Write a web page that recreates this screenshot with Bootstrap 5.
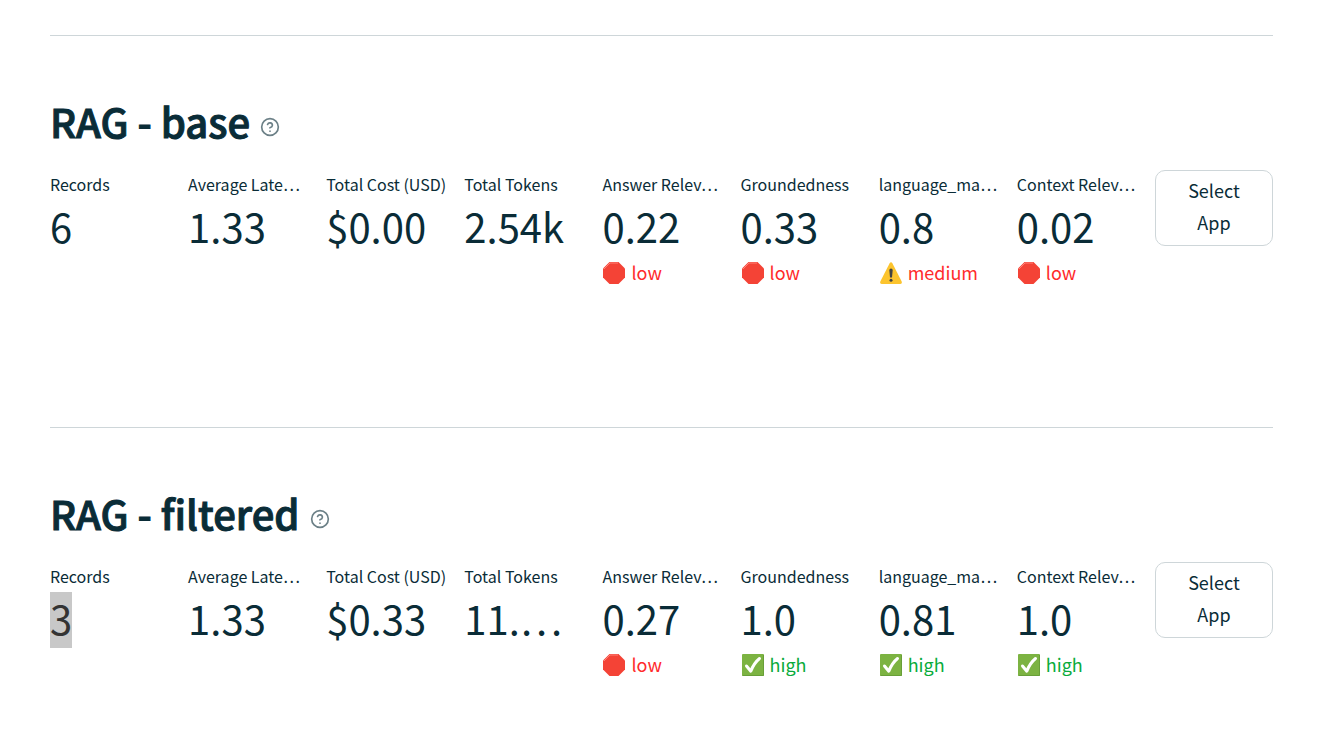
<!DOCTYPE html>
<html lang="en">
<head>
<meta charset="utf-8">
<meta name="viewport" content="width=device-width, initial-scale=1">
<title>App leaderboard</title>
<link href="https://cdn.jsdelivr.net/npm/bootstrap@5.3.0/dist/css/bootstrap.min.css" rel="stylesheet">
<style>
  body { font-family: "Noto Sans CJK KR", "Noto Sans", sans-serif; color: #0a2c37; background: #fff; }
  .leaderboard { padding: 35px 51px 0 50px; }
  .app-entry { border-top: 1px solid #ced6d9; min-height: 392px; padding-top: 56px; }
  .app-entry:last-child { min-height: 320px; }
  .app-title { font-size: 40px; line-height: 58px; font-weight: 500; margin-bottom: 20px; gap: 10px; }
  .app-title span { -webkit-text-stroke: 1px #0a2c37; }
  .help { color: #6c8087; margin-top: 12px; }
  .metrics { --bs-gutter-x: 20px; }
  .metrics > .col { min-width: 0; }
  .metric-label { font-size: 16px; line-height: 28px; }
  .metric-value { font-size: 40px; line-height: 56px; font-variant-east-asian: proportional-width; }
  .metric-value mark { padding: 0 0 2px; background: linear-gradient(#c8c8c8, #c8c8c8) 0 2px no-repeat; color: #333; display: inline-block; }
  .metric-delta { font-size: 18px; line-height: 32px; gap: 5px; margin-top: 2px; }
  .metric-delta svg { margin-top: 2px; }
  .bad { color: #ff2b2b; }
  .good { color: #09ab3b; }
  .select-btn { font-size: 18px; line-height: 32px; padding: 3px 15px 7px; color: #0a2c37; background: #fff; border: 1px solid #ced6d9; border-radius: 10px; }
</style>
</head>
<body>
<svg class="d-none" aria-hidden="true">
  <symbol id="i-help" viewBox="0 0 24 24"><g fill="none" stroke="currentColor" stroke-width="2" stroke-linecap="round" stroke-linejoin="round"><circle cx="12" cy="12" r="10"/><path d="M9.1 9a3 3 0 0 1 5.8 1c0 2-3 3-3 3M12 17h.01"/></g></symbol>
  <symbol id="i-stop" viewBox="0 0 22 22"><path fill="#f44336" d="M6.5 0h9L22 6.5v9L15.500 22h-9L0 15.500v-9z"/><path fill="none" stroke="#ff8177" d="M1 7 7 1h8"/></symbol>
  <symbol id="i-warn" viewBox="0 0 22 22"><path fill="#fcc42e" d="M9.500 1.500Q11-.8 12.500 1.500L21.700 19.500Q22.300 22 20 22H2Q-.3 22 .3 19.500z"/><path fill="#424242" d="M9.300 8q.2-1.600 1.700-1.600T12.700 8L12 15.500h-2z"/><circle cx="11" cy="18.300" r="1.500" fill="#424242"/></symbol>
  <symbol id="i-check" viewBox="0 0 22 22"><rect width="22" height="22" rx="1" fill="#7cb342"/><path fill="none" stroke="#689f38" d="M.5 21.500h21V1"/><path fill="none" stroke="#fff" stroke-width="3" stroke-linecap="round" stroke-linejoin="round" d="m4.500 12 4.300 5.200Q12 9 17.500 4.500"/></symbol>
</svg>
<main class="leaderboard">
  <section class="app-entry">
    <h2 class="app-title d-flex align-items-center"><span>RAG - base</span><svg class="help" width="20" height="20" role="img" aria-label="Help"><use href="#i-help"/></svg></h2>
    <div class="row metrics">
      <div class="col"><div class="metric-label text-nowrap">Records</div><div class="metric-value text-nowrap">6</div></div>
      <div class="col"><div class="metric-label text-nowrap">Average Late…</div><div class="metric-value text-nowrap">1.33</div></div>
      <div class="col"><div class="metric-label text-nowrap">Total Cost (USD)</div><div class="metric-value text-nowrap">$0.00</div></div>
      <div class="col"><div class="metric-label text-nowrap">Total Tokens</div><div class="metric-value text-nowrap">2.54k</div></div>
      <div class="col"><div class="metric-label text-nowrap">Answer Relev…</div><div class="metric-value text-nowrap">0.22</div><div class="metric-delta bad d-flex align-items-center"><svg width="24" height="22"><use href="#i-stop"/></svg>low</div></div>
      <div class="col"><div class="metric-label text-nowrap">Groundedness</div><div class="metric-value text-nowrap">0.33</div><div class="metric-delta bad d-flex align-items-center"><svg width="24" height="22"><use href="#i-stop"/></svg>low</div></div>
      <div class="col"><div class="metric-label text-nowrap">language_ma…</div><div class="metric-value text-nowrap">0.8</div><div class="metric-delta bad d-flex align-items-center"><svg width="24" height="22"><use href="#i-warn"/></svg>medium</div></div>
      <div class="col"><div class="metric-label text-nowrap">Context Relev…</div><div class="metric-value text-nowrap">0.02</div><div class="metric-delta bad d-flex align-items-center"><svg width="24" height="22"><use href="#i-stop"/></svg>low</div></div>
      <div class="col"><button type="button" class="btn select-btn w-100">Select<br>App</button></div>
    </div>
  </section>
  <section class="app-entry">
    <h2 class="app-title d-flex align-items-center"><span>RAG - filtered</span><svg class="help" width="20" height="20" role="img" aria-label="Help"><use href="#i-help"/></svg></h2>
    <div class="row metrics">
      <div class="col"><div class="metric-label text-nowrap">Records</div><div class="metric-value text-nowrap"><mark>3</mark></div></div>
      <div class="col"><div class="metric-label text-nowrap">Average Late…</div><div class="metric-value text-nowrap">1.33</div></div>
      <div class="col"><div class="metric-label text-nowrap">Total Cost (USD)</div><div class="metric-value text-nowrap">$0.33</div></div>
      <div class="col"><div class="metric-label text-nowrap">Total Tokens</div><div class="metric-value text-nowrap">11.…</div></div>
      <div class="col"><div class="metric-label text-nowrap">Answer Relev…</div><div class="metric-value text-nowrap">0.27</div><div class="metric-delta bad d-flex align-items-center"><svg width="24" height="22"><use href="#i-stop"/></svg>low</div></div>
      <div class="col"><div class="metric-label text-nowrap">Groundedness</div><div class="metric-value text-nowrap">1.0</div><div class="metric-delta good d-flex align-items-center"><svg width="24" height="22"><use href="#i-check"/></svg>high</div></div>
      <div class="col"><div class="metric-label text-nowrap">language_ma…</div><div class="metric-value text-nowrap">0.81</div><div class="metric-delta good d-flex align-items-center"><svg width="24" height="22"><use href="#i-check"/></svg>high</div></div>
      <div class="col"><div class="metric-label text-nowrap">Context Relev…</div><div class="metric-value text-nowrap">1.0</div><div class="metric-delta good d-flex align-items-center"><svg width="24" height="22"><use href="#i-check"/></svg>high</div></div>
      <div class="col"><button type="button" class="btn select-btn w-100">Select<br>App</button></div>
    </div>
  </section>
</main>
<script src="https://cdn.jsdelivr.net/npm/bootstrap@5.3.0/dist/js/bootstrap.bundle.min.js"></script>
</body>
</html>
